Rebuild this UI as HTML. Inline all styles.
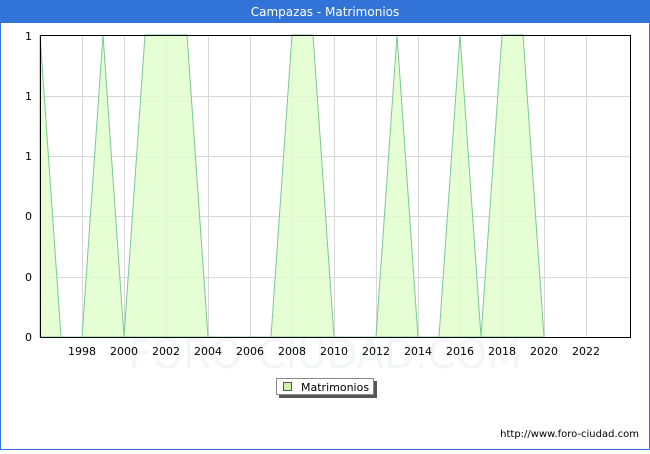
<!DOCTYPE html>
<html><head><meta charset="utf-8"><style>
body{margin:0;width:650px;height:450px;overflow:hidden;background:#fff;font-family:"DejaVu Sans","Liberation Sans",sans-serif}
</style></head><body>
<svg width="650" height="450" xmlns="http://www.w3.org/2000/svg" font-family="DejaVu Sans, Liberation Sans, sans-serif">
<rect x="0.5" y="0.5" width="649" height="449" fill="#fff" stroke="#3273d8"/>
<rect x="0" y="0" width="650" height="23" fill="#3273d8"/>
<text x="325" y="16" text-anchor="middle" fill="#fff" font-size="12">Campazas - Matrimonios</text>
<g stroke="#d8d8d8" stroke-width="1">
<line x1="40" y1="96.5" x2="630" y2="96.5"/><line x1="40" y1="156.5" x2="630" y2="156.5"/>
<line x1="40" y1="216.5" x2="630" y2="216.5"/><line x1="40" y1="277.5" x2="630" y2="277.5"/>
<line x1="82.5" y1="35" x2="82.5" y2="337"/><line x1="124.5" y1="35" x2="124.5" y2="337"/>
<line x1="166.5" y1="35" x2="166.5" y2="337"/><line x1="208.5" y1="35" x2="208.5" y2="337"/>
<line x1="250.5" y1="35" x2="250.5" y2="337"/><line x1="292.5" y1="35" x2="292.5" y2="337"/>
<line x1="334.5" y1="35" x2="334.5" y2="337"/><line x1="376.5" y1="35" x2="376.5" y2="337"/>
<line x1="418.5" y1="35" x2="418.5" y2="337"/><line x1="460.5" y1="35" x2="460.5" y2="337"/>
<line x1="502.5" y1="35" x2="502.5" y2="337"/><line x1="544.5" y1="35" x2="544.5" y2="337"/>
<line x1="586.5" y1="35" x2="586.5" y2="337"/>
</g>
<path d="M40 35 L61 337 L82 337 L103 35 L124 337 L145 35 L187 35 L208 337 L271 337 L292 35 L313 35 L334 337 L376 337 L397 35 L418 337 L439 337 L460 35 L481 337 L502 35 L523 35 L544 337 L40 337 Z" fill="#e2fecb" fill-opacity="0.85" stroke="#7cc79a" stroke-width="1"/>
<text x="325" y="368" text-anchor="middle" font-size="40" fill="#eef0f6" opacity="0.6">FORO-CIUDAD.COM</text>
<rect x="40.5" y="35.5" width="590" height="302" fill="none" stroke="#000"/>
<g font-size="11" fill="#000" text-anchor="end">
<text x="32" y="40">1</text><text x="32" y="100">1</text><text x="32" y="160">1</text>
<text x="32" y="220">0</text><text x="32" y="281">0</text><text x="32" y="341">0</text>
</g>
<g font-size="11" fill="#000" text-anchor="middle">
<text x="82" y="355">1998</text><text x="124" y="355">2000</text><text x="166" y="355">2002</text>
<text x="208" y="355">2004</text><text x="250" y="355">2006</text><text x="292" y="355">2008</text>
<text x="334" y="355">2010</text><text x="376" y="355">2012</text><text x="418" y="355">2014</text>
<text x="460" y="355">2016</text><text x="502" y="355">2018</text><text x="544" y="355">2020</text>
<text x="586" y="355">2022</text>
</g>
<rect x="279" y="381" width="98" height="17" fill="#555"/>
<rect x="276.5" y="378.5" width="97" height="16" fill="#fff" stroke="#888"/>
<rect x="283.5" y="382.5" width="8" height="8" fill="#cdf5a8" stroke="#555"/>
<text x="301" y="391" font-size="11" fill="#000">Matrimonios</text>
<text x="639" y="437" text-anchor="end" font-size="10" fill="#000">http://www.foro-ciudad.com</text>
</svg>
</body></html>
